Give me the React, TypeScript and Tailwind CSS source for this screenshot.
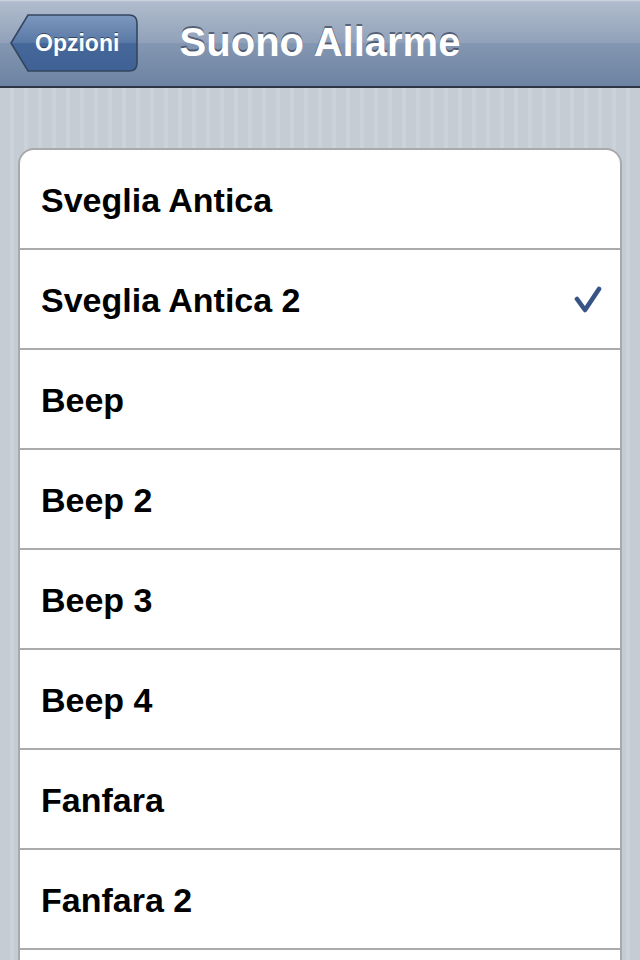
import React from "react";

const items = [
  "Sveglia Antica",
  "Sveglia Antica 2",
  "Beep",
  "Beep 2",
  "Beep 3",
  "Beep 4",
  "Fanfara",
  "Fanfara 2",
  "",
];

function BackButton() {
  return (
    <div className="relative ml-[10px] flex h-[58px] w-[128px] items-center pl-[25px] pr-[18px]">
      <svg
        className="absolute left-0 top-0"
        width="128"
        height="58"
        viewBox="0 0 128 58"
      >
        <defs>
          <linearGradient id="bb" x1="0" y1="0" x2="0" y2="1">
            <stop offset="0" stopColor="#7e98bf" />
            <stop offset="0.5" stopColor="#5878a5" />
            <stop offset="0.5" stopColor="#456799" />
            <stop offset="1" stopColor="#3f6195" />
          </linearGradient>
        </defs>
        <path
          d="M18 1 L119 1 Q127 1 127 9 L127 49 Q127 57 119 57 L18 57 L1 29 Z"
          fill="url(#bb)"
          stroke="#33465f"
          strokeWidth="1.6"
        />
      </svg>
      <span className="relative text-[23px] font-bold leading-none text-white [text-shadow:0_-1px_0_rgba(0,0,0,0.45)]">
        Opzioni
      </span>
    </div>
  );
}

function Check() {
  return (
    <svg width="28" height="30" viewBox="0 0 28 30">
      <path
        d="M3 14 L11 25 L25 4"
        fill="none"
        stroke="#385487"
        strokeWidth="4.6"
        strokeLinecap="round"
        strokeLinejoin="round"
      />
    </svg>
  );
}

export default function App() {
  return (
    <div className="flex h-[960px] w-[640px] flex-col overflow-hidden font-['Liberation_Sans',Arial,Helvetica,sans-serif] bg-[repeating-linear-gradient(90deg,#c5ccd4_0px,#c5ccd4_10px,#cbd2d9_10px,#cbd2d9_14px)]">
      <div className="grid h-[88px] shrink-0 grid-cols-[1fr_auto_1fr] items-center border-b-2 border-[#2d3642] bg-[linear-gradient(to_bottom,#cfd7e1_0px,#b0bccd_2px,#91a1b9_43px,#8497b2_43px,#6d83a2_86px)]">
        <div className="flex items-center">
          <BackButton />
        </div>
        <div className="pb-[2px] text-[40px] font-bold leading-none text-white [text-shadow:0_-2px_0_rgba(40,50,70,0.6)]">
          Suono Allarme
        </div>
        <div />
      </div>
      <div className="px-[18px] pt-[60px]">
        <div className="overflow-hidden rounded-[16px] border-2 border-[#a7a9ac] bg-white">
          {items.map((label, i) => (
            <div
              key={i}
              className={`flex h-[100px] items-center justify-between pl-[21px] pr-[18px] pt-[1px] ${
                i < items.length - 1 ? "border-b-2 border-[#ababab]" : ""
              }`}
            >
              <span className="text-[34px] font-bold leading-none text-black">
                {label}
              </span>
              {label === "Sveglia Antica 2" ? <Check /> : null}
            </div>
          ))}
        </div>
      </div>
    </div>
  );
}
